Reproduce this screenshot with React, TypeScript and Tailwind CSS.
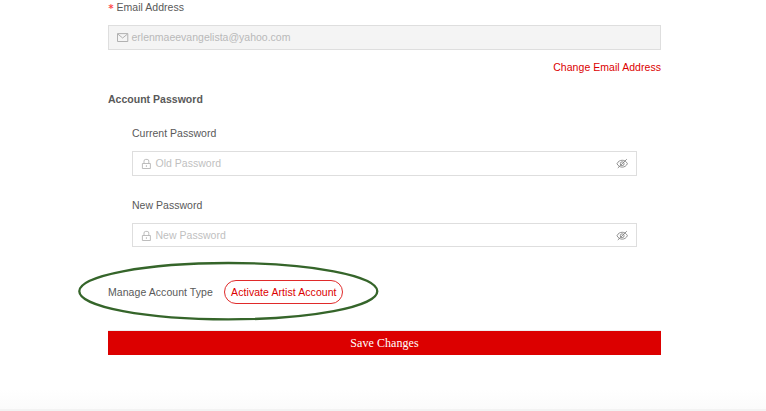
import type { ReactNode } from 'react';

function MailIcon() {
  return (
    <svg viewBox="0 0 12 12" className="mr-[3px] h-3 w-3 text-[#a9a9a9]" fill="none" stroke="currentColor" strokeWidth="0.9">
      <path d="M0.5 1.6H10.8V9.5H0.5Z" />
      <path d="M0.9 2.1L5.65 6L10.4 2.1" />
    </svg>
  );
}

function LockIcon() {
  return (
    <svg viewBox="0 0 12 12" className="mr-[3px] h-3 w-3 text-[#b5b5b5]" fill="none" stroke="currentColor" strokeWidth="0.9">
      <path d="M1.4 5.5H9.4V10.5H1.4Z" />
      <path d="M3 5.5V3.1Q3 1.4 4.7 1.4H6.1Q7.8 1.4 7.8 3.1V5.5" />
      <path d="M5.4 7.2V8.9" />
    </svg>
  );
}

function HiddenEye() {
  return (
    <svg viewBox="0 0 12 12" className="h-3 w-3 text-[#7d7d7d]" fill="none" stroke="currentColor" strokeWidth="0.85">
      <path d="M1 5.7C3.1 1.1 9.3 1.1 11.4 5.7C9.3 10.3 3.1 10.3 1 5.7Z" />
      <circle cx="6.2" cy="5.7" r="1.9" />
      <path d="M1.8 10L10.8 1.2" />
    </svg>
  );
}

function PasswordField({ label, placeholder, boxClass }: { label: string; placeholder: string; boxClass: string }) {
  return (
    <div className="h-[72px]">
      <div className="h-6 leading-6">{label}</div>
      <div className={`mt-[6px] flex items-center border border-[#dedede] px-2 text-[#bfbfbf] ${boxClass}`}>
        <LockIcon />
        <span className="-ml-[0.5px] flex-1">{placeholder}</span>
        <HiddenEye />
      </div>
    </div>
  );
}

function Shell({ children }: { children: ReactNode }) {
  return (
    <div className="relative flex h-[411px] w-[766px] flex-col overflow-hidden bg-white pl-[108px] pr-[105px] font-['Liberation_Sans',Arial,sans-serif] text-[10.5px] tracking-[0.02px] text-[#595959]">
      {children}
    </div>
  );
}

export default function App() {
  return (
    <Shell>
      <div className="flex h-[25px] shrink-0 items-start leading-4">
        <span className="mr-[2.5px] font-['DejaVu_Sans_Mono',monospace] text-[10px] font-bold leading-[18px] text-[#ff4d4f]">*</span>
        <span className="leading-[15px]">Email Address</span>
      </div>
      <div className="flex h-[25px] shrink-0 items-center border border-[#dedede] bg-[#f4f4f4] px-2 text-[#b9b9b9]">
        <MailIcon />
        <span className="-ml-[0.5px] tracking-[0px]">erlenmaeevangelista@yahoo.com</span>
      </div>
      <a className="mt-[9px] h-4 shrink-0 self-end leading-4 tracking-[0.05px] text-[#dc0000]">Change Email Address</a>
      <h2 className="mt-4 h-4 shrink-0 font-bold leading-4">Account Password</h2>
      <div className="mt-[14px] h-[144px] shrink-0 px-6">
        <PasswordField label="Current Password" placeholder="Old Password" boxClass="h-[25px]" />
        <PasswordField label="New Password" placeholder="New Password" boxClass="h-6 pt-px" />
      </div>
      <div className="mt-[14px] flex h-[26px] shrink-0 items-center">
        <span className="mr-[11px] mt-px tracking-[0.06px]">Manage Account Type</span>
        <button className="h-6 w-[119px] whitespace-nowrap rounded-full border border-[#e02a2a] pl-px leading-[23px] tracking-[0.07px] text-[#dc0000]">
          Activate Artist Account
        </button>
      </div>
      <button className="mt-[26px] h-6 shrink-0 bg-[#dc0000] font-['Liberation_Serif','Times_New_Roman',serif] text-[12px] leading-6 tracking-[0.05px] text-white shadow-[0_-1px_0_#eeeeee]">
        Save Changes
      </button>
      <svg className="pointer-events-none absolute left-[76px] top-[258px] h-[66px] w-[306px]" viewBox="0 0 306 66" fill="none">
        <ellipse cx="152.3" cy="33.2" rx="149" ry="28.2" stroke="#35652a" strokeWidth="2.3" />
      </svg>
      <div className="-ml-[108px] -mr-[105px] mt-auto h-[21px] shrink-0 border-b-2 border-[#f3f3f3] bg-gradient-to-b from-white to-[#fbfbfb]" />
    </Shell>
  );
}
